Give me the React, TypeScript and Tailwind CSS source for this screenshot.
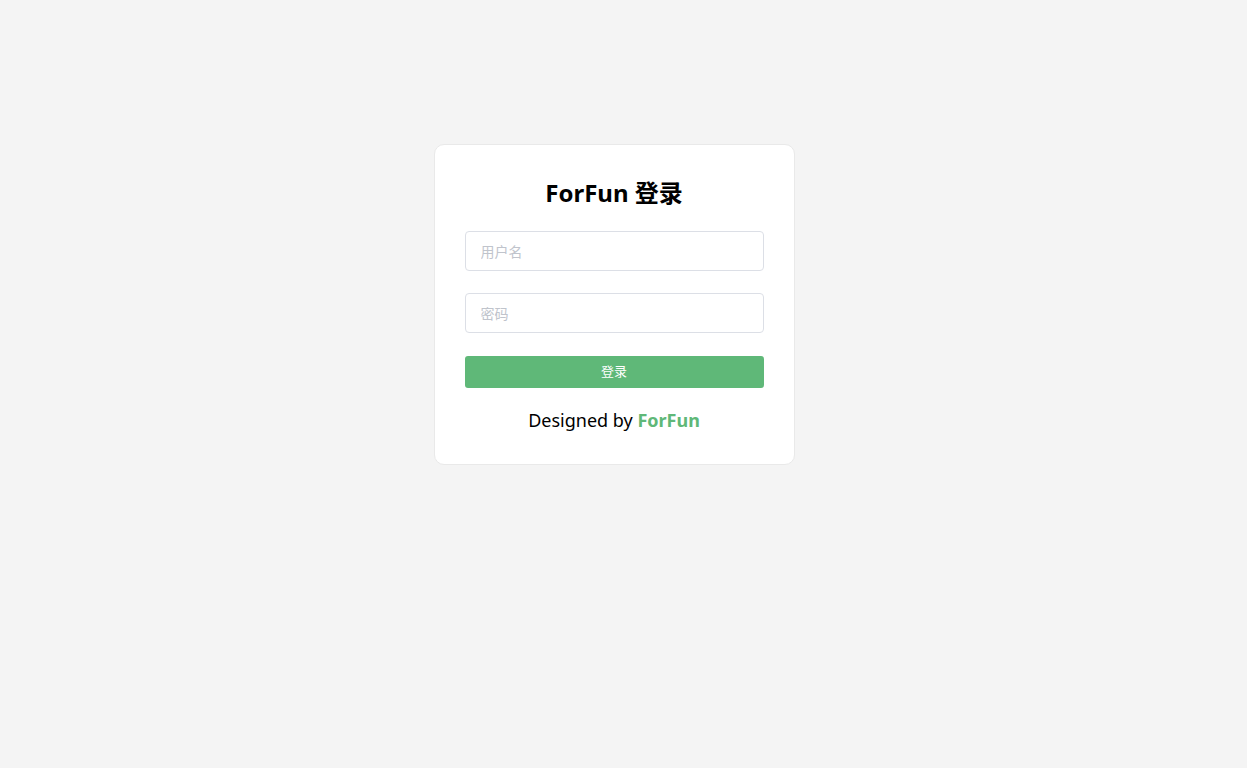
import React, { useState } from 'react';

const App: React.FC = () => {
  const [username, setUsername] = useState('');
  const [password, setPassword] = useState('');

  return (
    <div
      className="min-h-screen w-full bg-[#f4f4f4] pt-[144px] pr-[19px]"
      style={{ fontFamily: '"Noto Sans", "Noto Sans CJK SC", sans-serif' }}
    >
      <div className="mx-auto w-[361px] rounded-[10px] border border-[#e9e9e9] bg-white px-[30px] pt-[30px] pb-[30px]">
        {/* Title */}
        <h2 className="text-center text-[24px] font-bold leading-[36px] text-black">ForFun 登录</h2>

        <form className="mt-[20px] flex flex-col" onSubmit={(e) => e.preventDefault()}>
          <input
            type="text"
            value={username}
            onChange={(e) => setUsername(e.target.value)}
            placeholder="用户名"
            className="h-[40px] w-full rounded-[4px] border border-[#dcdfe6] px-[15px] text-[14px] text-[#333] outline-none placeholder:text-[#c0c4cc]"
          />
          <input
            type="password"
            value={password}
            onChange={(e) => setPassword(e.target.value)}
            placeholder="密码"
            className="mt-[22px] h-[40px] w-full rounded-[4px] border border-[#dcdfe6] px-[15px] text-[14px] text-[#333] outline-none placeholder:text-[#c0c4cc]"
          />
          <button
            type="submit"
            className="mt-[23px] h-[32px] w-full rounded-[3px] bg-[#5fb878] text-[13px] text-white"
          >
            登录
          </button>
        </form>

        {/* Footer */}
        <p className="mt-[18px] text-center text-[18px] leading-[28px] text-black">
          Designed by <span className="font-bold text-[#5fb878]">ForFun</span>
        </p>
      </div>
    </div>
  );
};

export default App;
